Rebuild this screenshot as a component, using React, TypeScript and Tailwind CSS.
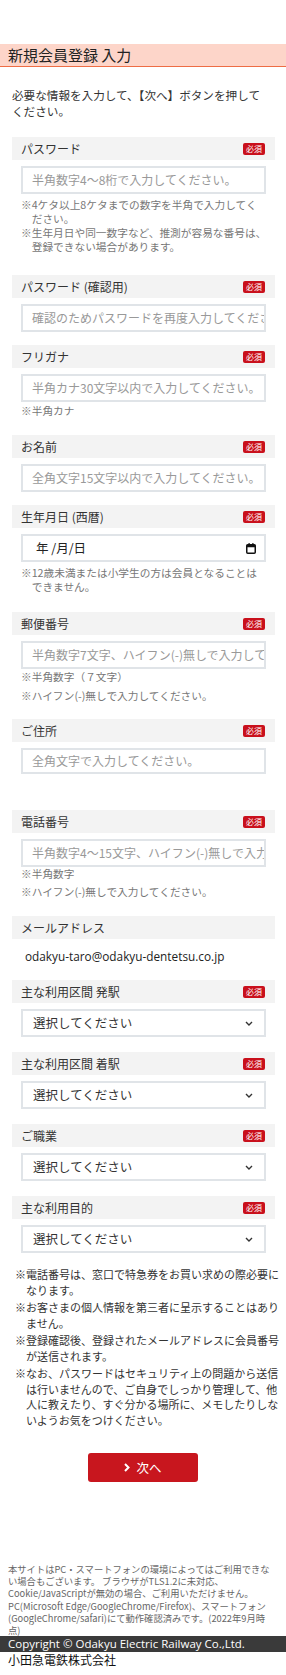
import type { ReactNode } from 'react';

const jp = { fontFamily: '"Noto Sans CJK JP", sans-serif' };
const latin = { fontFamily: '"Open Sans", "Noto Sans CJK JP", sans-serif' };

function Badge() {
  return (
    <span className="flex h-[12px] w-[22px] items-center justify-center rounded-[2px] bg-[#c9101c] text-[8px] leading-none text-white">
      必須
    </span>
  );
}

function Band({ label, required = true }: { label: string; required?: boolean }) {
  return (
    <div className="flex h-[23px] items-center justify-between bg-[#f3f3f3] pl-[9px] pr-[10px]">
      <span className="text-[12px] leading-[16px] text-[#333]">{label}</span>
      {required && <Badge />}
    </div>
  );
}

function TextBox({ placeholder, h = 'h-[28px]' }: { placeholder: string; h?: string }) {
  return (
    <div
      className={`mx-[9px] mt-[6px] flex ${h} items-center overflow-hidden whitespace-nowrap border-2 border-[#e0e4e8] bg-white pl-[9px] text-[12px] leading-[16px] text-[#999]`}
    >
      {placeholder}
    </div>
  );
}

function SelectBox() {
  return (
    <div className="mx-[9px] mt-[6px] flex h-[28px] items-center justify-between border-2 border-[#e0e4e8] bg-white pl-[10px] pr-[11px] text-[12.5px] leading-[16px] text-[#333]">
      <span>選択してください</span>
      <svg width="8" height="5" viewBox="0 0 8 5">
        <polyline points="1,1 4,4 7,1" fill="none" stroke="#333" strokeWidth="1.4" />
      </svg>
    </div>
  );
}

function Note({ children, className = '' }: { children: ReactNode; className?: string }) {
  return (
    <p className={`pl-[calc(9px+1em)] -indent-[1em] whitespace-nowrap text-[10.7px] leading-[14px] text-[#777] ${className}`}>
      {children}
    </p>
  );
}

function Field({ label, required, children, className = '' }: { label: string; required?: boolean; children: ReactNode; className?: string }) {
  return (
    <div className={className}>
      <Band label={label} required={required} />
      {children}
    </div>
  );
}

export default function App() {
  return (
    <div className="w-[286px] overflow-hidden bg-white pt-[44px]" style={jp}>
      <div className="flex h-[23px] items-center border-b border-[#ee6d45] bg-[#fdd5c9] pl-[8px]">
        <h1 className="text-[15px] leading-[20px] text-[#222]">新規会員登録 入力</h1>
      </div>

      <p className="mt-[20px] whitespace-nowrap px-[12px] text-[11.6px] leading-[16px] text-[#333]">
        必要な情報を入力して、【次へ】ボタンを押して
        <br />
        ください。
      </p>

      <div className="mt-[18px] pl-[12px] pr-[11px]">
        <Field label="パスワード" className="mb-[21px]">
          <TextBox placeholder="半角数字4〜8桁で入力してください。" />
          <div className="mt-[4px]">
            <Note>
              ※4ケタ以上8ケタまでの数字を半角で入力してく
              <br />
              ださい。
            </Note>
            <Note>
              ※生年月日や同一数字など、推測が容易な番号は、
              <br />
              登録できない場合があります。
            </Note>
          </div>
        </Field>

        <Field label="パスワード (確認用)" className="mb-[13px]">
          <TextBox placeholder="確認のためパスワードを再度入力してください。" />
        </Field>

        <Field label="フリガナ" className="mb-[17px]">
          <TextBox placeholder="半角カナ30文字以内で入力してください。" />
          <Note className="mt-[2px]">※半角カナ</Note>
        </Field>

        <Field label="お名前" className="mb-[13px]">
          <TextBox placeholder="全角文字15文字以内で入力してください。" />
        </Field>

        <Field label="生年月日 (西暦)" className="mb-[18px]">
          <div className="mx-[9px] mt-[6px] flex h-[28px] items-center justify-between border-2 border-[#e0e4e8] bg-white pl-[13px] pr-[8px] text-[12.5px] leading-[16px] text-[#222]">
            <span>年 /月/日</span>
            <svg width="10" height="11" viewBox="0 0 10 11">
              <rect x="0.75" y="1.75" width="8.5" height="8.5" rx="1" fill="none" stroke="#111" strokeWidth="1.5" />
              <rect x="0.75" y="1.75" width="8.5" height="2.5" fill="#111" />
              <rect x="2.5" y="0" width="1.2" height="2.5" fill="#111" />
              <rect x="6.3" y="0" width="1.2" height="2.5" fill="#111" />
            </svg>
          </div>
          <Note className="mt-[4px]">
            ※12歳未満または小学生の方は会員となることは
            <br />
            できません。
          </Note>
        </Field>

        <Field label="郵便番号" className="mb-[16px]">
          <TextBox placeholder="半角数字7文字、ハイフン(-)無しで入力してください。" />
          <Note className="mt-[1px]">※半角数字（７文字）</Note>
          <Note className="mt-[5px]">※ハイフン(-)無しで入力してください。</Note>
        </Field>

        <Field label="ご住所" className="mb-[36px]">
          <TextBox placeholder="全角文字で入力してください。" h="h-[26px]" />
        </Field>

        <Field label="電話番号" className="mb-[17px]">
          <TextBox placeholder="半角数字4〜15文字、ハイフン(-)無しで入力してください。" />
          <Note className="mt-0">※半角数字</Note>
          <Note className="mt-[4px]">※ハイフン(-)無しで入力してください。</Note>
        </Field>

        <Field label="メールアドレス" required={false} className="mb-[16px]">
          <p className="mt-[9px] pl-[13px] text-[11.8px] leading-[16px] text-[#222]" style={latin}>
            odakyu-taro@odakyu-dentetsu.co.jp
          </p>
        </Field>

        <Field label="主な利用区間 発駅" className="mb-[15px]">
          <SelectBox />
        </Field>
        <Field label="主な利用区間 着駅" className="mb-[15px]">
          <SelectBox />
        </Field>
        <Field label="ご職業" className="mb-[15px]">
          <SelectBox />
        </Field>
        <Field label="主な利用目的">
          <SelectBox />
        </Field>

        <div className="mt-[14px] whitespace-nowrap pl-[3px] text-[11px] leading-[15.5px] text-[#333]">
          <p className="mb-[2px] pl-[1em] -indent-[1em]">
            ※電話番号は、窓口で特急券をお買い求めの際必要に
            <br />
            なります。
          </p>
          <p className="mb-[2px] pl-[1em] -indent-[1em]">
            ※お客さまの個人情報を第三者に呈示することはあり
            <br />
            ません。
          </p>
          <p className="mb-[2px] pl-[1em] -indent-[1em]">
            ※登録確認後、登録されたメールアドレスに会員番号
            <br />
            が送信されます。
          </p>
          <p className="pl-[1em] -indent-[1em]">
            ※なお、パスワードはセキュリティ上の問題から送信
            <br />
            は行いませんので、ご自身でしっかり管理して、他
            <br />
            人に教えたり、すぐ分かる場所に、メモしたりしな
            <br />
            いようお気をつけください。
          </p>
        </div>

        <div className="mt-[25px] flex justify-center pr-[1px]">
          <button className="flex h-[29px] w-[110px] items-center justify-center gap-[6px] rounded-[3px] bg-[#c8161e] text-[12.5px] leading-[16px] text-white">
            <svg width="6" height="9" viewBox="0 0 6 9">
              <polyline points="1,1 4.5,4.5 1,8" fill="none" stroke="#fff" strokeWidth="2" />
            </svg>
            次へ
          </button>
        </div>
      </div>

      <p className="mt-[81px] whitespace-nowrap px-[8px] text-[9.3px] leading-[12.2px] text-[#666]">
        本サイトはPC・スマートフォンの環境によってはご利用できな
        <br />
        い場合もございます。 ブラウザがTLS1.2に未対応、
        <br />
        Cookie/JavaScriptが無効の場合、ご利用いただけません。
        <br />
        PC(Microsoft Edge/GoogleChrome/Firefox)、スマートフォン
        <br />
        (GoogleChrome/safari)にて動作確認済みです。(2022年9月時
        <br />
        点)
      </p>
      <div className="flex h-[16px] items-center whitespace-nowrap bg-[#3a3a3a] pl-[8px] text-[11.5px] leading-[14px] text-white" style={latin}>
        Copyright © Odakyu Electric Railway Co.,Ltd.
      </div>
      <p className="pl-[8px] text-[12px] leading-[16px] text-[#111]">小田急電鉄株式会社</p>
    </div>
  );
}
